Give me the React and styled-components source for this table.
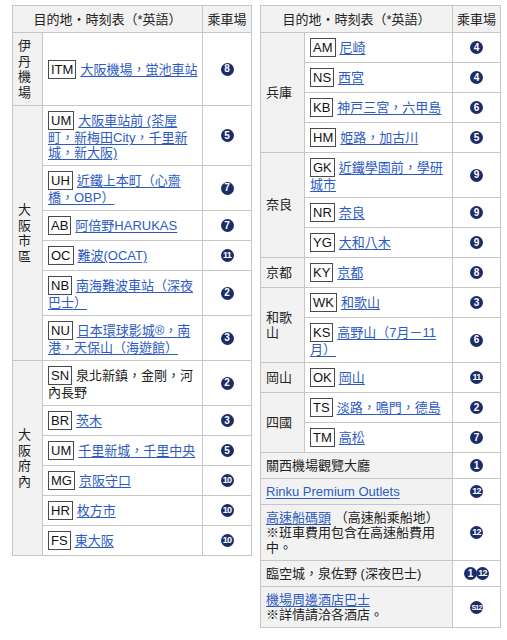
import React from "react";
import styled, { createGlobalStyle } from "styled-components";

const GlobalStyle = createGlobalStyle`
  html, body { margin: 0; padding: 0; background: #fff; }
  body {
    font-family: "Liberation Sans", "Noto Sans CJK TC", sans-serif;
    font-size: 13px;
    color: #222;
  }
`;

const Page = styled.div`
  display: flex;
  align-items: flex-start;
  gap: 8px;
  padding: 5px 8px 0 12px;
`;

const Table = styled.table`
  border-collapse: collapse;
  table-layout: fixed;
  width: ${(p) => p.$w}px;
  border: 1px solid #c6c6c6;
`;

const HeadCell = styled.th`
  background: #f2f2f2;
  border: 1px solid #c6c6c6;
  font-weight: normal;
  text-align: center;
  white-space: nowrap;
  line-height: 15px;
  padding: 6px 2px 5px;
`;

const RegionCell = styled.td`
  background: #f2f2f2;
  border: 1px solid #c6c6c6;
  text-align: left;
  vertical-align: middle;
  line-height: 15.5px;
  padding: 5px 5px;
`;

const DestCell = styled.td`
  background: ${(p) => (p.$shaded ? "#f2f2f2" : "#fff")};
  border: 1px solid #c6c6c6;
  vertical-align: middle;
  line-height: 15px;
  padding: 5px 5px;
  white-space: nowrap;
`;

const StopCell = styled.td`
  background: #fff;
  border: 1px solid #c6c6c6;
  text-align: center;
  vertical-align: middle;
  line-height: 15px;
  padding: 5px 2px;
  white-space: nowrap;
`;

const Code = styled.span`
  display: inline-block;
  border: 1px solid #4a4a4a;
  background: #fff;
  color: #111;
  padding: 1px 2px;
  line-height: 15px;
  margin-right: 4px;
  font-family: "Liberation Sans", sans-serif;
`;

const Link = styled.a`
  color: #2d5bc4;
  text-decoration: underline;
  text-underline-offset: 2px;
`;

const Stop = styled.span`
  display: inline-flex;
  align-items: center;
  justify-content: center;
  width: 13px;
  height: 13px;
  border-radius: 50%;
  background: #1b2c68;
  color: #fff;
  font-family: "Liberation Sans", sans-serif;
  font-weight: bold;
  font-size: ${(p) => p.$fs}px;
  letter-spacing: ${(p) => p.$ls}px;
  line-height: 1;
  vertical-align: middle;
  position: relative;
  top: -1px;
  & + & { margin-left: -1px; }
`;

function StopMark({ n }) {
  const len = n.length;
  const fs = len === 1 ? 10 : len === 2 ? 9 : 7;
  const ls = len === 1 ? 0 : -0.8;
  return (
    <Stop $fs={fs} $ls={ls}>
      {n}
    </Stop>
  );
}

function Lines({ lines }) {
  return lines.map((l, i) => (
    <React.Fragment key={i}>
      {i > 0 && <br />}
      {l}
    </React.Fragment>
  ));
}

const leftData = [
  {
    region: "伊丹機場",
    rows: [{ code: "ITM", lines: ["大阪機場，蛍池車站"], stop: ["8"] }],
  },
  {
    region: "大阪市區",
    rows: [
      { code: "UM", lines: ["大阪車站前 (茶屋", "町，新梅田City，千里新", "城，新大阪)"], stop: ["5"] },
      { code: "UH", lines: ["近鐵上本町（心齋", "橋，OBP）"], stop: ["7"] },
      { code: "AB", lines: ["阿倍野HARUKAS"], stop: ["7"] },
      { code: "OC", lines: ["難波(OCAT)"], stop: ["11"] },
      { code: "NB", lines: ["南海難波車站（深夜", "巴士）"], stop: ["2"] },
      { code: "NU", lines: ["日本環球影城®，南", "港，天保山（海遊館）"], stop: ["3"] },
    ],
  },
  {
    region: "大阪府內",
    rows: [
      { code: "SN", lines: ["泉北新鎮，金剛，河", "內長野"], stop: ["2"], plain: true },
      { code: "BR", lines: ["茨木"], stop: ["3"] },
      { code: "UM", lines: ["千里新城，千里中央"], stop: ["5"] },
      { code: "MG", lines: ["京阪守口"], stop: ["10"] },
      { code: "HR", lines: ["枚方市"], stop: ["10"] },
      { code: "FS", lines: ["東大阪"], stop: ["10"] },
    ],
  },
];

const rightData = [
  {
    region: "兵庫",
    rows: [
      { code: "AM", lines: ["尼崎"], stop: ["4"] },
      { code: "NS", lines: ["西宮"], stop: ["4"] },
      { code: "KB", lines: ["神戸三宮，六甲島"], stop: ["6"] },
      { code: "HM", lines: ["姫路，加古川"], stop: ["5"] },
    ],
  },
  {
    region: "奈良",
    rows: [
      { code: "GK", lines: ["近鐵學園前，學研", "城市"], stop: ["9"] },
      { code: "NR", lines: ["奈良"], stop: ["9"] },
      { code: "YG", lines: ["大和八木"], stop: ["9"] },
    ],
  },
  { region: "京都", rows: [{ code: "KY", lines: ["京都"], stop: ["8"] }] },
  {
    region: "和歌山",
    rows: [
      { code: "WK", lines: ["和歌山"], stop: ["3"] },
      { code: "KS", lines: ["高野山（7月－11", "月）"], stop: ["6"] },
    ],
  },
  { region: "岡山", rows: [{ code: "OK", lines: ["岡山"], stop: ["11"] }] },
  {
    region: "四國",
    rows: [
      { code: "TS", lines: ["淡路，鳴門，德島"], stop: ["2"] },
      { code: "TM", lines: ["高松"], stop: ["7"] },
    ],
  },
];

function Head() {
  return (
    <thead>
      <tr>
        <HeadCell colSpan={2}>目的地・時刻表（*英語）</HeadCell>
        <HeadCell>乘車場</HeadCell>
      </tr>
    </thead>
  );
}

function GroupRows({ groups }) {
  return groups.map((g) =>
    g.rows.map((r, i) => (
      <tr key={g.region + i}>
        {i === 0 && <RegionCell rowSpan={g.rows.length}>{g.region}</RegionCell>}
        <DestCell>
          <Code>{r.code}</Code>
          {r.plain ? <Lines lines={r.lines} /> : <Link href="#"><Lines lines={r.lines} /></Link>}
        </DestCell>
        <StopCell>
          {r.stop.map((s) => (
            <StopMark key={s} n={s} />
          ))}
        </StopCell>
      </tr>
    ))
  );
}

export default function App() {
  return (
    <>
      <GlobalStyle />
      <Page>
        <Table $w={239}>
          <colgroup>
            <col style={{ width: 30 }} />
            <col style={{ width: 160 }} />
            <col style={{ width: 49 }} />
          </colgroup>
          <Head />
          <tbody>
            <GroupRows groups={leftData} />
          </tbody>
        </Table>
        <Table $w={240}>
          <colgroup>
            <col style={{ width: 44 }} />
            <col style={{ width: 148 }} />
            <col style={{ width: 48 }} />
          </colgroup>
          <Head />
          <tbody>
            <GroupRows groups={rightData} />
            <tr>
              <DestCell colSpan={2} $shaded>關西機場觀覽大廳</DestCell>
              <StopCell><StopMark n="1" /></StopCell>
            </tr>
            <tr>
              <DestCell colSpan={2} $shaded>
                <Link href="#">Rinku Premium Outlets</Link>
              </DestCell>
              <StopCell><StopMark n="12" /></StopCell>
            </tr>
            <tr>
              <DestCell colSpan={2} $shaded>
                <Link href="#">高速船碼頭</Link> （高速船乘船地）
                <br />※班車費用包含在高速船費用
                <br />中。
              </DestCell>
              <StopCell><StopMark n="12" /></StopCell>
            </tr>
            <tr>
              <DestCell colSpan={2} $shaded>臨空城，泉佐野 (深夜巴士)</DestCell>
              <StopCell><StopMark n="1" /><StopMark n="12" /></StopCell>
            </tr>
            <tr>
              <DestCell colSpan={2} $shaded>
                <Link href="#">機場周邊酒店巴士</Link>
                <br />※詳情請洽各酒店。
              </DestCell>
              <StopCell><StopMark n="S12" /></StopCell>
            </tr>
          </tbody>
        </Table>
      </Page>
    </>
  );
}
